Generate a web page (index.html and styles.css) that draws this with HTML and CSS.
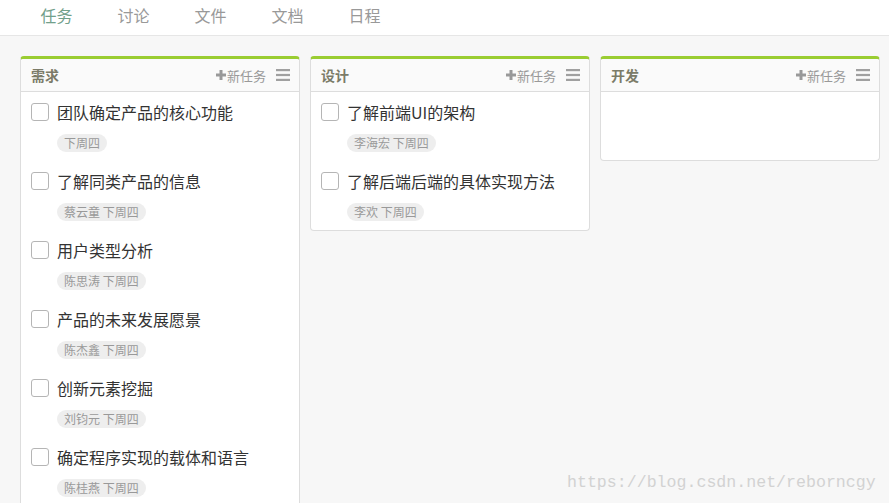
FILE: index.html
```html
<!DOCTYPE html>
<html lang="zh">
<head>
<meta charset="utf-8">
<title>任务</title>
<link rel="stylesheet" href="styles.css">
</head>
<body>
<nav class="tabs">
  <a class="tab active">任务</a>
  <a class="tab">讨论</a>
  <a class="tab">文件</a>
  <a class="tab">文档</a>
  <a class="tab">日程</a>
</nav>
<main class="board">
  <section class="column">
    <header class="col-head">
      <span class="col-title">需求</span>
      <span class="col-actions">
        <span class="add"><svg class="plus" viewBox="0 0 10 10" width="10" height="10"><rect x="3.5" y="0" width="3" height="10"/><rect x="0" y="3.5" width="10" height="3"/></svg>新任务</span>
        <svg class="menu" viewBox="0 0 14 12" width="14" height="12"><rect x="0" y="0" width="14" height="2.2"/><rect x="0" y="4.9" width="14" height="2.2"/><rect x="0" y="9.8" width="14" height="2.2"/></svg>
      </span>
    </header>
    <div class="col-body">
      <div class="task"><div class="task-row"><span class="check"></span><span class="task-text">团队确定产品的核心功能</span></div><span class="tag">下周四</span></div>
      <div class="task"><div class="task-row"><span class="check"></span><span class="task-text">了解同类产品的信息</span></div><span class="tag">蔡云童 下周四</span></div>
      <div class="task"><div class="task-row"><span class="check"></span><span class="task-text">用户类型分析</span></div><span class="tag">陈思涛 下周四</span></div>
      <div class="task"><div class="task-row"><span class="check"></span><span class="task-text">产品的未来发展愿景</span></div><span class="tag">陈杰鑫 下周四</span></div>
      <div class="task"><div class="task-row"><span class="check"></span><span class="task-text">创新元素挖掘</span></div><span class="tag">刘钧元 下周四</span></div>
      <div class="task"><div class="task-row"><span class="check"></span><span class="task-text">确定程序实现的载体和语言</span></div><span class="tag">陈桂燕 下周四</span></div>
    </div>
  </section>
  <section class="column">
    <header class="col-head">
      <span class="col-title">设计</span>
      <span class="col-actions">
        <span class="add"><svg class="plus" viewBox="0 0 10 10" width="10" height="10"><rect x="3.5" y="0" width="3" height="10"/><rect x="0" y="3.5" width="10" height="3"/></svg>新任务</span>
        <svg class="menu" viewBox="0 0 14 12" width="14" height="12"><rect x="0" y="0" width="14" height="2.2"/><rect x="0" y="4.9" width="14" height="2.2"/><rect x="0" y="9.8" width="14" height="2.2"/></svg>
      </span>
    </header>
    <div class="col-body">
      <div class="task"><div class="task-row"><span class="check"></span><span class="task-text">了解前端UI的架构</span></div><span class="tag">李海宏 下周四</span></div>
      <div class="task"><div class="task-row"><span class="check"></span><span class="task-text">了解后端后端的具体实现方法</span></div><span class="tag">李欢 下周四</span></div>
    </div>
  </section>
  <section class="column">
    <header class="col-head">
      <span class="col-title">开发</span>
      <span class="col-actions">
        <span class="add"><svg class="plus" viewBox="0 0 10 10" width="10" height="10"><rect x="3.5" y="0" width="3" height="10"/><rect x="0" y="3.5" width="10" height="3"/></svg>新任务</span>
        <svg class="menu" viewBox="0 0 14 12" width="14" height="12"><rect x="0" y="0" width="14" height="2.2"/><rect x="0" y="4.9" width="14" height="2.2"/><rect x="0" y="9.8" width="14" height="2.2"/></svg>
      </span>
    </header>
    <div class="col-body empty"></div>
  </section>
</main>
<div class="watermark">https://blog.csdn.net/reborncgy</div>
</body>
</html>
```

FILE: styles.css
```css
html, body {
  margin: 0;
  padding: 0;
  height: 100%;
  overflow: hidden;
}
body {
  background: #f7f7f7;
  font-family: "Noto Sans CJK SC", "Noto Sans", sans-serif;
  color: #333;
  position: relative;
}
.tabs {
  display: flex;
  height: 35px;
  background: #fff;
  border-bottom: 1px solid #e6e6e6;
  padding-left: 18px;
  align-items: center;
}
.tab {
  padding: 0 22.5px;
  font-size: 16px;
  line-height: 32px;
  color: #999;
  margin-top: -5px;
}
.tab.active {
  color: #72a08b;
}
.board {
  display: flex;
  align-items: flex-start;
  gap: 10px;
  padding: 20px 0 0 20px;
}
.column {
  width: 280px;
  box-sizing: border-box;
  background: #fff;
  border: 1px solid #ddd;
  border-top: 3px solid #9acd32;
  border-radius: 4px;
  flex: none;
}
.col-head {
  display: flex;
  align-items: center;
  justify-content: space-between;
  height: 32px;
  padding: 0 9px 0 10px;
  background: #fafafa;
  border-bottom: 1px solid #ddd;
  border-radius: 3px 3px 0 0;
}
.col-title {
  font-size: 14px;
  font-weight: bold;
  color: #7b7b68;
}
.col-actions {
  display: flex;
  align-items: center;
  gap: 10px;
}
.add {
  display: flex;
  align-items: center;
  font-size: 13px;
  color: #999;
  gap: 1px;
}
.plus, .menu {
  fill: #999;
  display: block;
}
.menu {
  fill: #a0a0a0;
}
.col-body.empty {
  height: 68px;
}
.task {
  padding: 10px 10px 9px 10px;
}
.task-row {
  display: flex;
  align-items: center;
  gap: 8px;
  height: 20px;
}
.check {
  width: 18px;
  height: 18px;
  box-sizing: border-box;
  border: 1px solid #b5b5b5;
  border-radius: 3px;
  flex: none;
}
.task-text {
  font-size: 16px;
  line-height: 20px;
  color: #333;
}
.tag {
  display: inline-block;
  margin: 12px 0 0 26px;
  height: 18px;
  line-height: 18px;
  padding: 0 7px;
  border-radius: 9px;
  background: #eee;
  color: #999;
  font-size: 12px;
  vertical-align: top;
}
.watermark {
  position: absolute;
  left: 567px;
  top: 473px;
  font-family: "Liberation Mono", monospace;
  font-size: 16.6px;
  color: #d2d2d2;
  white-space: nowrap;
}
```
